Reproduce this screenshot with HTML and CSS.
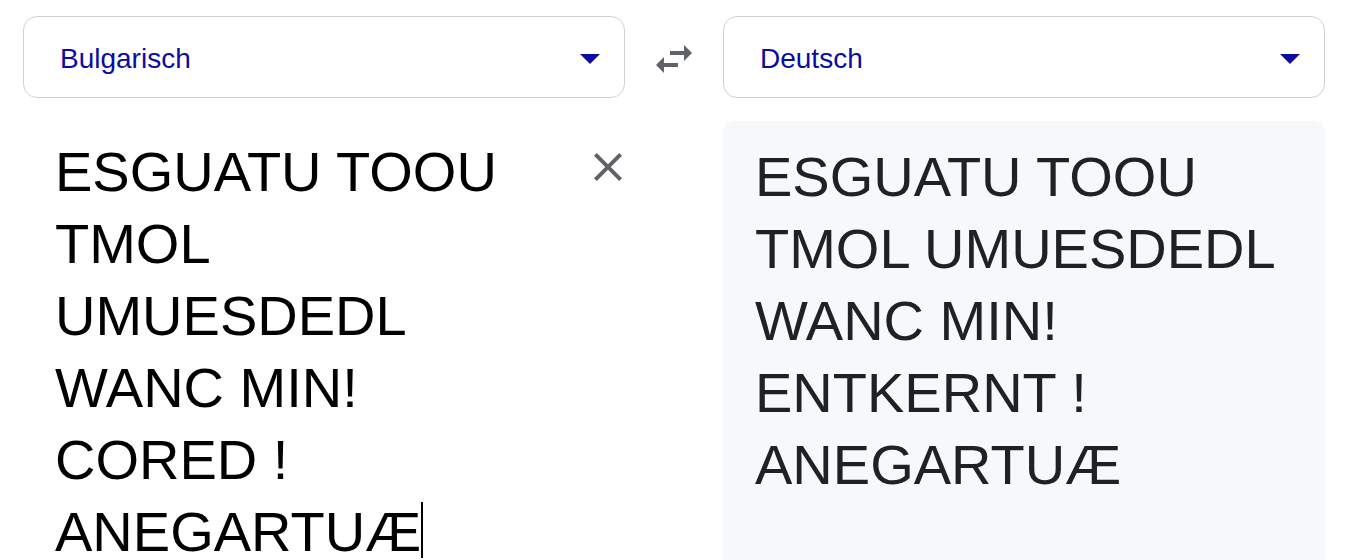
FILE: index.html
```html
<!DOCTYPE html>
<html lang="de">
<head>
  <meta charset="UTF-8">
  <meta name="viewport" content="width=device-width, initial-scale=1.0">
  <title>Übersetzer</title>
  <link rel="stylesheet" href="styles.css">
</head>
<body>

  <div class="translator">
    <!-- Sprachauswahl -->
    <div class="lang-select">
      <span>Bulgarisch</span>
      <svg class="arrow" width="20" height="10" viewBox="0 0 20 10"><path d="M0 0h20L10 10z"/></svg>
    </div>
    <div class="swap">
      <svg width="48" height="48" viewBox="0 0 24 24"><path d="M6.99 11L3 15l3.99 4v-3H14v-2H6.99v-3zM21 9l-4-4v3h-7v2h7v3l4-4z"/></svg>
    </div>
    <div class="lang-select">
      <span>Deutsch</span>
      <svg class="arrow" width="20" height="10" viewBox="0 0 20 10"><path d="M0 0h20L10 10z"/></svg>
    </div>

    <!-- Quelltext -->
    <div class="source">
      <p class="text">ESGUATU TOOU TMOL UMUESDEDL WANC MIN! CORED ! ANEGARTUÆ<span class="caret"></span></p>
      <svg class="clear" width="28" height="28" viewBox="5 5 14 14"><path d="M19 6.41L17.59 5 12 10.59 6.41 5 5 6.41 10.59 12 5 17.59 6.41 19 12 13.41 17.59 19 19 17.59 13.41 12z"/></svg>
    </div>
    <div></div>
    <!-- Übersetzung -->
    <div class="target">
      <p class="text">ESGUATU TOOU TMOL UMUESDEDL WANC MIN! ENTKERNT ! ANEGARTUÆ</p>
    </div>
  </div>

</body>
</html>
```

FILE: styles.css
```css
body {
  font-family: "Liberation Sans", Arial, sans-serif;
  margin: 0;
  background-color: #fff;
  height: 560px;
  overflow: hidden;
}
.translator {
  display: grid;
  grid-template-columns: 602px 98px 602px;
  row-gap: 23px;
  padding: 16px 0 0 23px;
}
.lang-select {
  display: flex;
  align-items: center;
  justify-content: space-between;
  height: 82px;
  box-sizing: border-box;
  border: 1px solid #d0d2d6;
  border-radius: 14px;
  padding: 3px 24px 0 36px;
  font-size: 28px;
  color: #0b0ba3;
}
.lang-select .arrow {
  fill: #0b0ba3;
}
.swap {
  display: flex;
  align-items: center;
  justify-content: center;
  padding-top: 3px;
  fill: #5f6368;
}
.source,
.target {
  position: relative;
  font-size: 56px;
  line-height: 72px;
}
.source {
  padding: 15px 80px 0 32px;
  color: #000;
}
.target {
  padding: 20px 28px 0 32px;
  min-height: 460px;
  background-color: #f7f8fa;
  border-radius: 12px;
  color: #202124;
}
.text {
  margin: 0;
}
.caret {
  display: inline-block;
  width: 2px;
  height: 56px;
  margin-top: 6px;
  vertical-align: top;
  background-color: #000;
}
.clear {
  position: absolute;
  top: 32px;
  right: 3px;
  fill: #5f6368;
}
```
